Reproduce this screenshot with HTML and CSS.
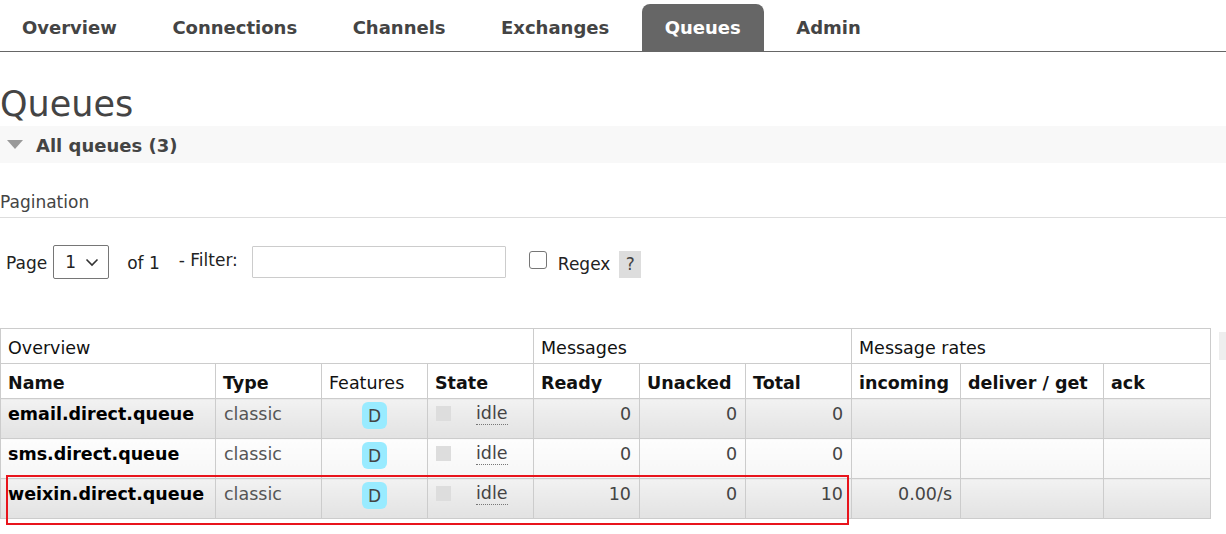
FILE: index.html
```html
<!DOCTYPE html>
<html lang="en">
<head>
    <meta charset="UTF-8">
    <title>RabbitMQ Management</title>
    <link rel="stylesheet" href="styles.css">
</head>
<body>
    <div class="nav">
        <ul class="tabs">
            <li><a href="#">Overview</a></li>
            <li><a href="#">Connections</a></li>
            <li><a href="#">Channels</a></li>
            <li><a href="#">Exchanges</a></li>
            <li class="active"><a href="#">Queues</a></li>
            <li><a href="#">Admin</a></li>
        </ul>
    </div>

    <div class="main">
        <h1>Queues</h1>
        <div class="section-head">
            <span class="arrow"></span>
            <h2>All queues (3)</h2>
        </div>

        <h3 class="pagination">Pagination</h3>
        <div class="filter">
            <label for="page">Page</label>
            <span class="select">
                <select id="page"><option>1</option></select>
                <svg class="chevron" width="14" height="9" viewBox="0 0 14 9"><path d="M1.5 1.5 L7 7 L12.5 1.5" fill="none" stroke="#333" stroke-width="1.6"/></svg>
            </span>
            <span class="of">of 1</span>
            <label for="filter" class="filter-label">- Filter:</label>
            <input type="text" id="filter" class="filter-input">
            <input type="checkbox" id="regex" class="check">
            <label for="regex" class="regex">Regex</label>
            <span class="help">?</span>
        </div>

        <div class="table-wrap">
            <table class="list">
                <colgroup>
                    <col class="c-name">
                    <col class="c-mid">
                    <col class="c-mid">
                    <col class="c-mid">
                    <col class="c-mid">
                    <col class="c-mid">
                    <col class="c-mid">
                    <col class="c-in">
                    <col class="c-get">
                    <col class="c-ack">
                </colgroup>
                <thead>
                    <tr class="group">
                        <th colspan="4">Overview</th>
                        <th colspan="3">Messages</th>
                        <th colspan="3">Message rates</th>
                    </tr>
                    <tr class="cols">
                        <th>Name</th>
                        <th>Type</th>
                        <th class="plain">Features</th>
                        <th>State</th>
                        <th>Ready</th>
                        <th>Unacked</th>
                        <th>Total</th>
                        <th>incoming</th>
                        <th>deliver / get</th>
                        <th>ack</th>
                    </tr>
                </thead>
                <tbody>
                    <tr class="alt1">
                        <td class="name">email.direct.queue</td>
                        <td class="type">classic</td>
                        <td class="feat"><span class="badge">D</span></td>
                        <td><span class="state"><span class="dot"></span><abbr>idle</abbr></span></td>
                        <td class="num">0</td>
                        <td class="num">0</td>
                        <td class="num">0</td>
                        <td class="num"></td>
                        <td></td>
                        <td></td>
                    </tr>
                    <tr class="alt2">
                        <td class="name">sms.direct.queue</td>
                        <td class="type">classic</td>
                        <td class="feat"><span class="badge">D</span></td>
                        <td><span class="state"><span class="dot"></span><abbr>idle</abbr></span></td>
                        <td class="num">0</td>
                        <td class="num">0</td>
                        <td class="num">0</td>
                        <td class="num"></td>
                        <td></td>
                        <td></td>
                    </tr>
                    <tr class="alt1">
                        <td class="name">weixin.direct.queue</td>
                        <td class="type">classic</td>
                        <td class="feat"><span class="badge">D</span></td>
                        <td><span class="state"><span class="dot"></span><abbr>idle</abbr></span></td>
                        <td class="num">10</td>
                        <td class="num">0</td>
                        <td class="num">10</td>
                        <td class="num">0.00/s</td>
                        <td></td>
                        <td></td>
                    </tr>
                </tbody>
            </table>
            <span class="toggle">+/-</span>
            <div class="highlight"></div>
        </div>
    </div>
</body>
</html>
```

FILE: styles.css
```css
* {
    margin: 0;
    padding: 0;
    box-sizing: border-box;
}
html {
    overflow: hidden;
}
body {
    font-family: "DejaVu Sans", Verdana, sans-serif;
    color: #444;
    background: #fff;
    width: 1226px;
    min-height: 534px;
}
.nav {
    padding-top: 4px;
    border-bottom: 1px solid #666;
}
.tabs {
    list-style: none;
    display: flex;
    gap: 9.5px;
    margin-left: -1px;
}
.tabs li a {
    display: block;
    height: 47px;
    line-height: 48px;
    padding: 0 23px;
    font-size: 18px;
    font-weight: bold;
    color: #444;
    text-decoration: none;
    border-radius: 8px 8px 0 0;
}
.tabs li.active a {
    background: #666;
    color: #fff;
}
h1 {
    font-size: 35px;
    font-weight: normal;
    line-height: 43px;
    margin-top: 31px;
    color: #444;
}
.section-head {
    display: flex;
    align-items: center;
    height: 37px;
    background: #f8f8f8;
}
.arrow {
    width: 0;
    height: 0;
    margin-left: 7px;
    margin-right: 13px;
    border-left: 8px solid transparent;
    border-right: 8px solid transparent;
    border-top: 9px solid #999;
}
h2 {
    font-size: 18px;
    font-weight: bold;
    color: #444;
    padding-top: 2px;
}
.pagination {
    font-size: 17px;
    font-weight: normal;
    line-height: 20px;
    margin-top: 29px;
    padding-bottom: 5px;
    border-bottom: 1px solid #ddd;
}
.filter {
    display: flex;
    align-items: center;
    height: 34px;
    margin-top: 27px;
    font-size: 17px;
    color: #222;
}
.filter label[for="page"] {
    margin-left: 6px;
    margin-top: 2px;
}
.select {
    position: relative;
    margin-left: 6px;
}
.select select {
    appearance: none;
    display: block;
    width: 56px;
    height: 34px;
    border: 1px solid #767676;
    border-radius: 2px;
    background: #fff;
    font-family: inherit;
    font-size: 17px;
    color: #222;
    padding-left: 11px;
}
.chevron {
    position: absolute;
    right: 10px;
    top: 13px;
}
.of {
    margin-left: 18px;
    margin-top: 1px;
}
.filter-label {
    margin-left: 19px;
    margin-top: -4px;
}
.filter-input {
    width: 254px;
    height: 32px;
    margin-left: 14px;
    border: 1px solid #ccc;
    border-radius: 1px;
}
.check {
    appearance: none;
    width: 18px;
    height: 18px;
    margin-left: 23px;
    margin-top: -5px;
    border: 1px solid #767676;
    border-radius: 3px;
    background: #fff;
}
.regex {
    margin-left: 11px;
    margin-top: 4px;
}
.help {
    display: inline-block;
    width: 22px;
    height: 27px;
    line-height: 27px;
    text-align: center;
    margin-left: 9px;
    margin-top: 4px;
    background: #ddd;
    color: #444;
}
.table-wrap {
    position: relative;
    display: flex;
    align-items: flex-start;
    gap: 8px;
    margin-top: 49px;
}
.list {
    flex-shrink: 0;
    border-collapse: collapse;
    table-layout: fixed;
    width: 1210px;
    font-size: 17.5px;
}
.c-name { width: 215px; }
.c-mid { width: 106px; }
.c-in { width: 109px; }
.c-get { width: 143px; }
.c-ack { width: 107px; }
.list th, .list td {
    border: 1px solid #ccc;
    text-align: left;
    white-space: nowrap;
}
.list th {
    height: 35px;
    padding: 0 7px;
    color: #111;
}
.list .group th {
    font-weight: normal;
    padding-top: 4px;
}
.list .cols th {
    padding-top: 4px;
}
.list th.plain {
    font-weight: normal;
}
.list td {
    height: 40px;
    padding: 4px 8px 0;
    vertical-align: top;
    line-height: 22px;
    color: #444;
}
.alt1 td {
    background: linear-gradient(#f2f2f2, #e2e2e2);
}
.alt2 td {
    background: linear-gradient(#fdfdfd, #f6f6f6);
}
.list td.name {
    font-weight: bold;
    color: #000;
    padding-left: 7px;
}
.list td.type {
    color: #555;
}
.list td.num {
    text-align: right;
}
.list td.feat {
    text-align: center;
    padding-top: 3px;
}
.badge {
    display: inline-block;
    padding: 3px 6px 2px;
    line-height: 22px;
    border-radius: 6px;
    background: #99ebff;
    color: #444;
    font-size: 17px;
}
.state {
    display: flex;
    align-items: flex-start;
}
.dot {
    width: 15px;
    height: 15px;
    margin-top: 3px;
    background: #ddd;
}
.state abbr {
    margin-left: 25px;
    text-decoration: none;
    border-bottom: 1px dotted #777;
    line-height: 21px;
}
.toggle {
    margin-top: 4px;
    display: block;
    height: 28px;
    line-height: 28px;
    padding: 0 6px;
    background: #eee;
    color: #f60;
    font-size: 16px;
    white-space: nowrap;
}
.highlight {
    position: absolute;
    left: 6px;
    top: 147px;
    width: 843px;
    height: 50px;
    border: 2px solid #e8141c;
}
```
